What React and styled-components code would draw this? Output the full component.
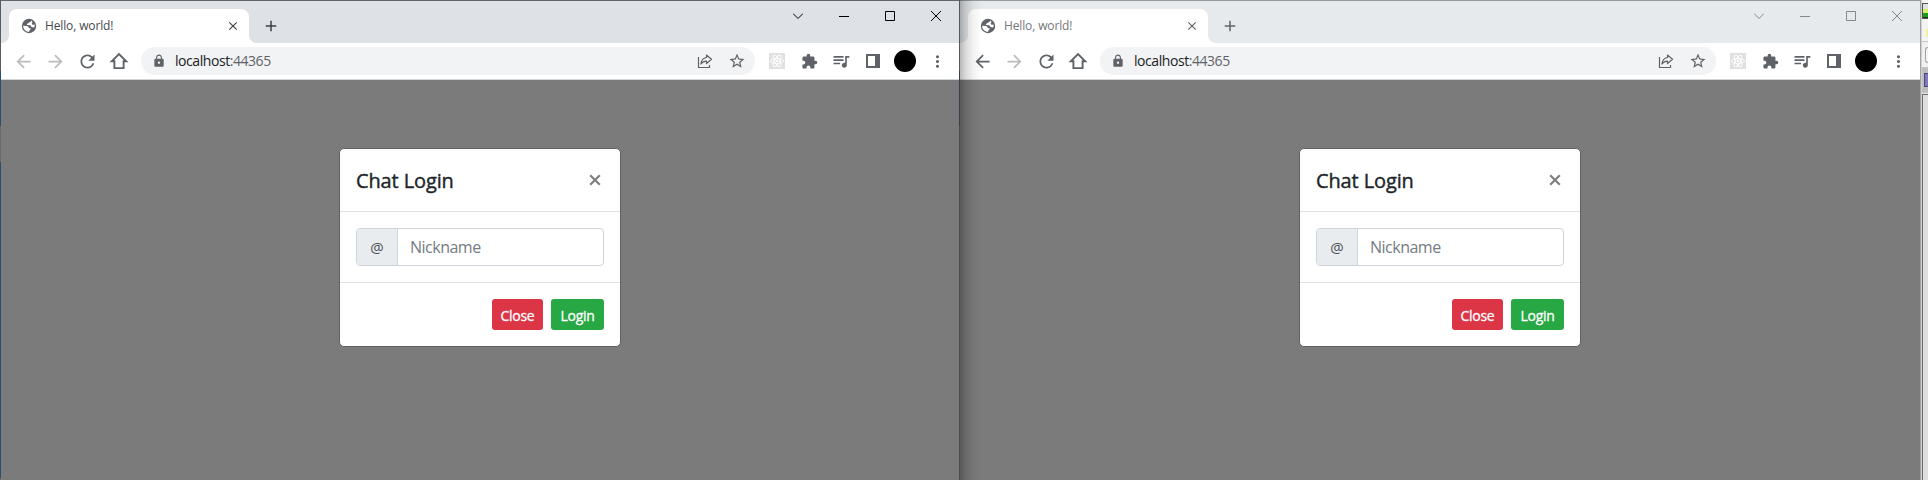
import React from "react";
import styled, { createGlobalStyle, css } from "styled-components";
import { MdArrowBack, MdArrowForward, MdRefresh, MdLock, MdStarBorder, MdExtension, MdQueueMusic, MdMoreVert, MdClose, MdAdd } from "react-icons/md";

const Global = createGlobalStyle`
  * { box-sizing: border-box; }
  body { margin: 0; overflow: hidden; background: #7b7b7b; font-family: "Open Sans", "Noto Sans", sans-serif; }
`;

const Desktop = styled.div`
  display: flex;
  width: 1928px;
  height: 480px;
  overflow: hidden;
`;

const EdgeLeft = styled.div`
  flex: none;
  width: 1px;
  background: linear-gradient(#5b5c5e 0 71px, #264f78 71px 126px, #6c6a68 126px 162px, #264f78 162px 478px, #6c6a68 478px);
`;

const EdgeMiddle = styled.div`
  flex: none;
  width: 1px;
  background: linear-gradient(#56585c 0 71px, #35424e 71px 126px, #4e4e4e 126px);
`;

const Window = styled.section`
  flex: none;
  display: flex;
  flex-direction: column;
  position: relative;
  width: ${(p) => p.$width}px;
  border-top: 1px solid ${(p) => (p.$active ? "#646569" : "#97999b")};
  ${(p) =>
    !p.$active &&
    css`
      &::after {
        content: "";
        position: absolute;
        inset: -1px auto 0 0;
        width: 22px;
        pointer-events: none;
        background: linear-gradient(90deg, rgba(0, 0, 0, 0.28), rgba(0, 0, 0, 0.15) 25%, rgba(0, 0, 0, 0.05) 60%, transparent);
      }
    `}
`;

const TabStrip = styled.header`
  display: flex;
  height: 42px;
  padding: 8px 0 0 8px;
  background: ${(p) => (p.$active ? "#dee1e6" : "#e7eaed")};
`;

const Tab = styled.div`
  position: relative;
  display: flex;
  align-items: center;
  width: 240px;
  height: 34px;
  padding: 0 9px 0 12px;
  border-radius: 8px 8px 0 0;
  background: #fff;
  &::before,
  &::after {
    content: "";
    position: absolute;
    bottom: 0;
    width: 8px;
    height: 8px;
  }
  &::before {
    left: -8px;
    background: radial-gradient(circle at 0 0, transparent 7.5px, #fff 8.5px);
  }
  &::after {
    right: -8px;
    background: radial-gradient(circle at 100% 0, transparent 7.5px, #fff 8.5px);
  }
`;

const TabTitle = styled.span`
  flex: 1;
  margin-left: 8px;
  font-size: 12px;
  line-height: 16px;
  letter-spacing: -0.13px;
  color: ${(p) => (p.$active ? "#45494d" : "#74777b")};
`;

const TabClose = styled.span`
  display: flex;
  color: ${(p) => (p.$active ? "#3c4043" : "#5f6368")};
`;

const NewTab = styled.div`
  display: flex;
  align-items: center;
  height: 34px;
  margin-left: 13px;
  color: ${(p) => (p.$active ? "#3c4043" : "#5f6368")};
`;

const Captions = styled.div`
  display: flex;
  margin: -8px 0 0 auto;
  height: 29px;
  color: ${(p) => (p.$active ? "#000" : "#85878a")};
`;

const CaptionButton = styled.div`
  display: flex;
  align-items: center;
  justify-content: center;
  width: 46px;
`;

const Toolbar = styled.nav`
  display: flex;
  align-items: center;
  height: 37px;
  padding: 0 6px;
  border-bottom: 1px solid #d3d5d6;
  background: #fff;
`;

const ToolButton = styled.div`
  display: flex;
  align-items: center;
  justify-content: center;
  flex: none;
  width: 32px;
  height: 28px;
  color: ${(p) => (p.$disabled ? "#babcbe" : "#5f6368")};
`;

const AddressBar = styled.div`
  flex: 1;
  display: flex;
  align-items: center;
  height: 28px;
  margin: 0 6px;
  padding: 0 2px 0 11px;
  border-radius: 14px;
  background: #f1f3f4;
  color: #5f6368;
`;

const Address = styled.span`
  flex: 1;
  margin-left: 9px;
  font-size: 14px;
  line-height: 20px;
  letter-spacing: -0.44px;
  color: #5f6368;
  b {
    font-weight: 400;
    color: #202124;
  }
`;

const Avatar = styled.div`
  width: 22px;
  height: 22px;
  border-radius: 50%;
  background: #000;
`;

const Page = styled.main`
  flex: 1;
  display: flex;
  align-items: flex-start;
  justify-content: center;
  padding-top: 68px;
  background: #7b7b7b;
`;

const Dialog = styled.div`
  width: 282px;
  border: 1px solid #626262;
  border-radius: 5px;
  background: #fff;
`;

const DialogHeader = styled.div`
  display: flex;
  align-items: center;
  justify-content: space-between;
  height: 63px;
  padding: 0 19px 0 16px;
  border-bottom: 1px solid #dee2e6;
`;

const DialogTitle = styled.h5`
  margin: 0;
  padding-top: 2px;
  font-size: 20px;
  font-weight: 400;
  -webkit-text-stroke: 0.4px currentColor;
  line-height: 30px;
  letter-spacing: -0.12px;
  color: #212529;
`;

const DialogBody = styled.div`
  padding: 16px;
  height: 70px;
`;

const InputGroup = styled.div`
  display: flex;
  height: 38px;
  border: 1px solid #ced4da;
  border-radius: 4px;
  overflow: hidden;
`;

const Prefix = styled.span`
  display: flex;
  align-items: center;
  justify-content: center;
  width: 41px;
  border-right: 1px solid #ced4da;
  background: #e9ecef;
  color: #495057;
  font-size: 15px;
`;

const Field = styled.span`
  padding: 0 12px;
  font-size: 16px;
  line-height: 37px;
  letter-spacing: -0.5px;
  color: #757c83;
`;

const DialogFooter = styled.div`
  display: flex;
  justify-content: flex-end;
  gap: 8px;
  height: 64px;
  padding: 16px;
  border-top: 1px solid #dee2e6;
`;

const Button = styled.div`
  width: ${(p) => p.$width}px;
  height: 31px;
  border-radius: 3px;
  background: ${(p) => p.$color};
  color: #fff;
  font-size: 14px;
  font-weight: 400;
  -webkit-text-stroke: 0.3px currentColor;
  line-height: 33px;
  letter-spacing: -0.3px;
  text-align: center;
`;

const Background = styled.aside`
  flex: none;
  display: flex;
  flex-direction: column;
  width: 8px;
  padding-left: 2px;
  background: linear-gradient(90deg, #a2a2a2 0 1px, #cfcfcf 1px 2px, #e4e4e4 2px);
`;

const BackgroundBar = styled.div`
  display: flex;
  align-items: center;
  flex: none;
  height: ${(p) => p.$height}px;
  border-bottom: 1px solid #c4c4c4;
  background: ${(p) => p.$fill};
`;

const TitleBar = styled(BackgroundBar)`
  flex-direction: column;
  align-items: flex-start;
  gap: 10px;
  padding-top: 3px;
`;

const ImageThumb = styled.div`
  width: 6px;
  height: 16px;
  border: 1px solid #555;
  border-right: 0;
  background: linear-gradient(#dfe3e6 0 5px, #d5ee68 5px 9px, #1f9a18 9px 13px, #123c10 13px);
`;

const YellowMark = styled.div`
  width: 2px;
  height: 8px;
  margin-left: 4px;
  background: #f1f0a0;
`;

const FieldEdge = styled.div`
  width: 3px;
  height: 16px;
  margin-left: 3px;
  border: 1px solid #a3a3a3;
  border-right: 0;
  border-radius: 3px 0 0 3px;
  background: #f4f4f4;
`;

const PurpleThumb = styled.div`
  width: 4px;
  height: 14px;
  margin-left: 2px;
  border: 1px solid #4d4680;
  border-right: 0;
  background: #8178b8;
`;

const BackgroundPane = styled.div`
  flex: 1;
  margin-top: 1px;
  border: solid #6e6e6e;
  border-width: 1px 0 0 1px;
  background: #dedede;
`;

const GlobeIcon = () => (
  <svg width="16" height="16" viewBox="0 0 16 16">
    <circle cx="8" cy="8" r="7.2" fill="#5f6368" />
    <path d="M10.100 2.300c.2 1.300-.6 1.900-1.800 2.100-1 .2-1 1-1.900 1.300-.8.300-.8 1.300.2 1.400l2.200.2c1 .1 1.300.9 1.500 1.700l2.900.5c.5-.8.600-2.100.300-3.200-.5.700-1.500.7-2.300.1-.7-.6-.4-1.700.4-2.200Z" fill="#fff" />
    <path d="M2.100 7.700l3.600.3c1.300.2 2.100 1 2.100 2l1.500.3c.6.200.5 1.200-.1 1.500-.8.400-.9 1-1 1.900-3.200.3-6-2.300-6.100-6Z" fill="#fff" />
  </svg>
);

const HomeIcon = () => (
  <svg width="20" height="20" viewBox="0 0 20 20" fill="none" stroke="currentColor" strokeWidth="1.9">
    <path d="M2.800 10.200H5.400V17.100H14.600V10.200H17.200L10 3.100Z" />
  </svg>
);

const ShareIcon = () => (
  <svg width="18" height="18" viewBox="0 0 18 18" fill="none" stroke="currentColor" strokeWidth="1.200">
    <path d="M2.500 5v10.500h11V13" />
    <path d="M10.500 3l5 4.300-5 4.200V9.200C8 9.200 6.300 10 4.900 12c.4-3.600 2.400-6 5.600-6.500Z" strokeLinejoin="round" />
  </svg>
);

const ReactIcon = () => (
  <svg width="16" height="16" viewBox="0 0 16 16" fill="none" stroke="#fff" strokeWidth="0.9">
    <rect width="16" height="16" fill="#e0e0e0" stroke="none" />
    <ellipse cx="8" cy="8" rx="6.500" ry="2.500" />
    <ellipse cx="8" cy="8" rx="6.500" ry="2.500" transform="rotate(60 8 8)" />
    <ellipse cx="8" cy="8" rx="6.500" ry="2.500" transform="rotate(120 8 8)" />
    <circle cx="8" cy="8" r="1.300" fill="#fff" stroke="none" />
  </svg>
);

const PanelIcon = () => (
  <svg width="14" height="14" viewBox="0 0 14 14">
    <path fillRule="evenodd" d="M0 0h14v14H0ZM2 2v10h7V2Z" fill="currentColor" />
  </svg>
);

const captionPaths = ["M0 2.500l5 5 5-5", "M0 5.500h10", "M.5.5h9v9h-9Z", "M0 0l10 10M10 0L0 10"];

const CloseMark = () => (
  <svg width="12" height="12" viewBox="0 0 12 12" fill="none" stroke="#7f7f7f" strokeWidth="2.200">
    <path d="M1.200 1.200l9.600 9.600M10.800 1.200L1.200 10.800" />
  </svg>
);

function Browser({ active, width }) {
  return (
    <Window $active={active} $width={width}>
      <TabStrip $active={active}>
        <Tab>
          <GlobeIcon />
          <TabTitle $active={active}>Hello, world!</TabTitle>
          <TabClose $active={active}><MdClose size={14} /></TabClose>
        </Tab>
        <NewTab $active={active}><MdAdd size={18} /></NewTab>
        <Captions $active={active}>
          {captionPaths.map((d) => (
            <CaptionButton key={d}>
              <svg width="10" height="10" viewBox="0 0 10 10" fill="none" stroke="currentColor"><path d={d} /></svg>
            </CaptionButton>
          ))}
        </Captions>
      </TabStrip>
      <Toolbar>
        <ToolButton $disabled={active}><MdArrowBack size={21} /></ToolButton>
        <ToolButton $disabled><MdArrowForward size={21} /></ToolButton>
        <ToolButton><MdRefresh size={21} /></ToolButton>
        <ToolButton><HomeIcon /></ToolButton>
        <AddressBar>
          <MdLock size={14} />
          <Address><b>localhost</b>:44365</Address>
          <ToolButton><ShareIcon /></ToolButton>
          <ToolButton><MdStarBorder size={18} /></ToolButton>
        </AddressBar>
        <ToolButton><ReactIcon /></ToolButton>
        <ToolButton><MdExtension size={17} /></ToolButton>
        <ToolButton><MdQueueMusic size={20} /></ToolButton>
        <ToolButton><PanelIcon /></ToolButton>
        <ToolButton><Avatar /></ToolButton>
        <ToolButton><MdMoreVert size={19} /></ToolButton>
      </Toolbar>
      <Page>
        <Dialog>
          <DialogHeader>
            <DialogTitle>Chat Login</DialogTitle>
            <CloseMark />
          </DialogHeader>
          <DialogBody>
            <InputGroup>
              <Prefix>@</Prefix>
              <Field>Nickname</Field>
            </InputGroup>
          </DialogBody>
          <DialogFooter>
            <Button $color="#dc3545" $width={51}>Close</Button>
            <Button $color="#28a745" $width={53}>Login</Button>
          </DialogFooter>
        </Dialog>
      </Page>
    </Window>
  );
}

export default function App() {
  return (
    <>
      <Global />
      <Desktop>
        <EdgeLeft />
        <Browser active width={958} />
        <EdgeMiddle />
        <Browser width={960} />
        <Background>
          <TitleBar $height={42} $fill="#f3f3f1">
            <ImageThumb />
            <YellowMark />
          </TitleBar>
          <BackgroundBar $height={26} $fill="#f0f0f0">
            <FieldEdge />
          </BackgroundBar>
          <BackgroundBar $height={25} $fill="#bdbdbd">
            <PurpleThumb />
          </BackgroundBar>
          <BackgroundPane />
        </Background>
      </Desktop>
    </>
  );
}
